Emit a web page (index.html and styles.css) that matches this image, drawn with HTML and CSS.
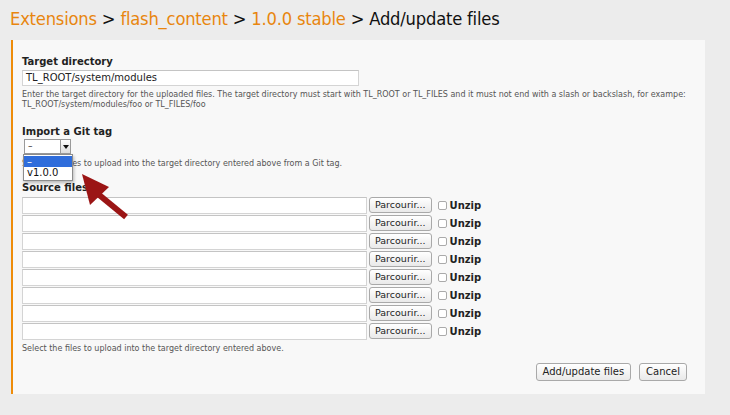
FILE: index.html
```html
<!DOCTYPE html>
<html>
<head>
<meta charset="utf-8">
<link rel="stylesheet" href="styles.css">
</head>
<body>
<h1 class="crumbs"><span class="link">Extensions</span> &gt; <span class="link">flash_content</span> &gt; <span class="link">1.0.0 stable</span> &gt; Add/update files</h1>
<div class="panel">
  <div class="field">
    <label class="lbl">Target directory</label>
    <div class="text dir">TL_ROOT/system/modules</div>
    <p class="help">Enter the target directory for the uploaded files. The target directory must start with TL_ROOT or TL_FILES and it must not end with a slash or backslash, for exampe: TL_ROOT/system/modules/foo or TL_FILES/foo</p>
  </div>
  <div class="field git">
    <label class="lbl">Import a Git tag</label>
    <div class="select"><span class="val">–</span><span class="btn-arrow"><svg width="6" height="4" viewBox="0 0 6 4"><path d="M0 0H6L3 4Z" fill="#111"/></svg></span></div>
    <p class="help">Select the files to upload into the target directory entered above from a Git tag.</p>
    <ul class="dropdown">
      <li class="sel">–</li>
      <li>v1.0.0</li>
    </ul>
  </div>
  <div class="field src">
    <label class="lbl">Source files</label>
    <div class="rows">
      <div class="row"><span class="text file"></span><span class="button">Parcourir...</span><span class="check"></span><span class="unzip">Unzip</span></div>
      <div class="row"><span class="text file"></span><span class="button">Parcourir...</span><span class="check"></span><span class="unzip">Unzip</span></div>
      <div class="row"><span class="text file"></span><span class="button">Parcourir...</span><span class="check"></span><span class="unzip">Unzip</span></div>
      <div class="row"><span class="text file"></span><span class="button">Parcourir...</span><span class="check"></span><span class="unzip">Unzip</span></div>
      <div class="row"><span class="text file"></span><span class="button">Parcourir...</span><span class="check"></span><span class="unzip">Unzip</span></div>
      <div class="row"><span class="text file"></span><span class="button">Parcourir...</span><span class="check"></span><span class="unzip">Unzip</span></div>
      <div class="row"><span class="text file"></span><span class="button">Parcourir...</span><span class="check"></span><span class="unzip">Unzip</span></div>
      <div class="row"><span class="text file"></span><span class="button">Parcourir...</span><span class="check"></span><span class="unzip">Unzip</span></div>
    </div>
    <p class="help">Select the files to upload into the target directory entered above.</p>
  </div>
  <div class="actions">
    <span class="button big">Add/update files</span>
    <span class="button big">Cancel</span>
  </div>
  <svg class="arrow" width="52" height="52" viewBox="0 0 52 52">
    <path d="M20 24 L48 47" stroke="#9b1515" stroke-width="6"/>
    <path d="M4 4 L31 17 L12 35 Z" fill="#9b1515"/>
  </svg>
</div>
</body>
</html>
```
FILE: styles.css
```css
* { box-sizing: border-box; }
body {
  margin: 0;
  background: #ececec;
  font-family: "DejaVu Sans", Verdana, sans-serif;
  color: #222;
  width: 730px;
  height: 415px;
  overflow: hidden;
}
.crumbs {
  margin: 0;
  padding: 8px 0 0 10px;
  height: 40px;
  font-family: "DejaVu Sans Condensed", "DejaVu Sans", sans-serif;
  font-weight: normal;
  font-size: 18.2px;
  color: #111;
  letter-spacing: -0.2px;
}
.crumbs .link { color: #e8860f; }
.panel {
  margin-left: 11px;
  width: 694px;
  height: 354px;
  background: #f8f8f8;
  border-left: 2px solid #ee8c0a;
  padding: 14px 10px 0 9px;
  position: relative;
}
.field { position: relative; }
.lbl {
  display: block;
  font-weight: bold;
  font-size: 10px;
  color: #222;
  height: 15px;
  line-height: 15px;
}
.text {
  display: block;
  background: #fff;
  border: 1px solid #d4d4d4;
  border-top-color: #c4c4c4;
}
.dir {
  width: 337px;
  height: 16px;
  font-size: 10px;
  line-height: 14px;
  padding: 0 3px;
  color: #222;
  margin: 1px 0 0;
}
.help {
  margin: 4px 0 0;
  font-size: 8px;
  line-height: 10px;
  color: #555;
}
.git { margin-top: 14px; }
.select {
  margin-top: 0;
  margin-left: 2px;
  width: 47px;
  height: 15px;
  border: 1px solid #9a9a9a;
  background: #fff;
  display: flex;
  font-size: 9px;
  line-height: 13px;
}
.select .val { flex: 1; padding-left: 3px; }
.btn-arrow {
  width: 10px;
  border-left: 1px solid #9a9a9a;
  background: linear-gradient(#fff, #ddd);
  display: flex;
  align-items: center;
  justify-content: center;
}
.git .help { margin-top: 5px; }
.dropdown {
  position: absolute;
  left: 1px;
  top: 30px;
  width: 50px;
  margin: 0;
  padding: 1px 0;
  list-style: none;
  background: #fff;
  border: 1px solid #8c8c8c;
  box-shadow: 1px 2px 3px rgba(0,0,0,0.25);
  font-size: 10px;
  z-index: 4;
}
.dropdown li {
  height: 12px;
  line-height: 12px;
  padding-left: 3px;
  color: #111;
}
.dropdown li.sel { background: #2f6ddb; color: #fff; height: 11px; }
.arrow {
  position: absolute;
  left: 65px;
  top: 130px;
  z-index: 5;
}
.src { margin-top: 11px; }
.rows { margin-top: 1px; }
.row {
  display: flex;
  align-items: center;
  height: 18px;
}
.file {
  width: 345px;
  height: 17px;
}
.button {
  display: inline-block;
  font-size: 9.5px;
  color: #222;
  background: linear-gradient(#fff, #e9e9e9);
  border: 1px solid #a9a9a9;
  border-radius: 3px;
  height: 16px;
  line-height: 14px;
  padding: 0 5px;
  margin-left: 2px;
}
.check {
  width: 9px;
  height: 9px;
  border: 1px solid #aaa;
  border-radius: 2px;
  background: #fff;
  margin-left: 6px;
}
.unzip {
  font-size: 10px;
  font-weight: bold;
  margin-left: 3px;
}
.src .help { margin-top: 4px; }
.actions {
  display: flex;
  justify-content: flex-end;
  gap: 6px;
  padding-right: 8px;
  margin-top: 9px;
}
.big { height: 18px; line-height: 16px; padding: 0 6px; font-size: 10px; }
```
